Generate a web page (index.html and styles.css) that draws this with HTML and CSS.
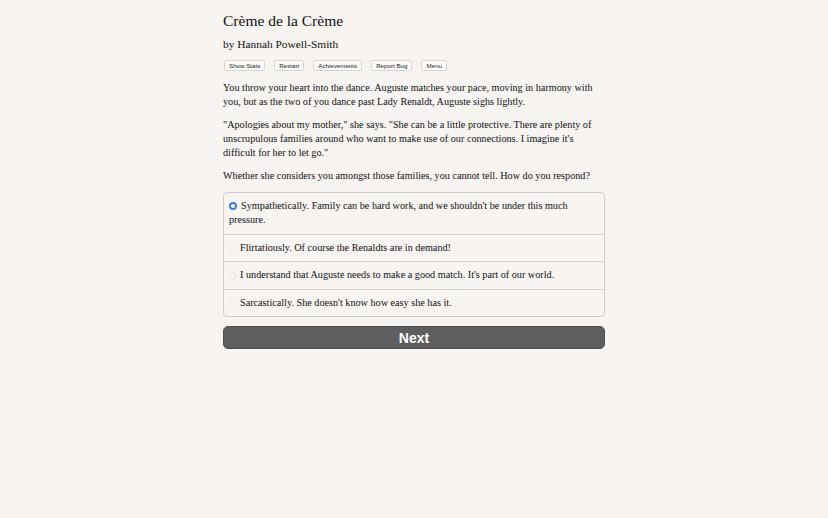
FILE: index.html
```html
<!DOCTYPE html>
<html>
<head>
<meta charset="utf-8">
<link rel="stylesheet" href="styles.css">
</head>
<body>
<div class="container">
  <header class="header">
    <h1 class="title">Crème de la Crème</h1>
    <h2 class="author">by Hannah Powell-Smith</h2>
    <div class="buttons">
      <button class="spacedLink">Show Stats</button>
      <button class="spacedLink">Restart</button>
      <button class="spacedLink">Achievements</button>
      <button class="spacedLink">Report Bug</button>
      <button class="spacedLink">Menu</button>
    </div>
  </header>
  <main class="text">
    <p>You throw your heart into the dance. Auguste matches your pace, moving in harmony with you, but as the two of you dance past Lady Renaldt, Auguste sighs lightly.</p>
    <p>"Apologies about my mother," she says. "She can be a little protective. There are plenty of unscrupulous families around who want to make use of our connections. I imagine it's difficult for her to let go."</p>
    <p>Whether she considers you amongst those families, you cannot tell. How do you respond?</p>
    <form class="choice">
      <label class="option first"><span class="radio checked"></span>Sympathetically. Family can be hard work, and we shouldn't be under this much pressure.</label>
      <label class="option"><span class="radio"></span>Flirtatiously. Of course the Renaldts are in demand!</label>
      <label class="option"><span class="radio"></span>I understand that Auguste needs to make a good match. It's part of our world.</label>
      <label class="option last"><span class="radio"></span>Sarcastically. She doesn't know how easy she has it.</label>
    </form>
    <button class="next">Next</button>
  </main>
</div>
</body>
</html>
```
FILE: styles.css
```css
html, body {
  margin: 0;
  padding: 0;
  background: #f7f4f1;
}
body {
  font-family: "Liberation Serif", "DejaVu Serif", serif;
  color: #111;
}
.container {
  width: 382px;
  margin: 0 auto;
  padding-top: 11px;
}
.title {
  font-size: 15.5px;
  font-weight: normal;
  margin: 0;
  line-height: 20px;
}
.author {
  font-size: 11.4px;
  font-weight: normal;
  margin: 6px 0 0 0;
  line-height: 14px;
}
.buttons {
  display: flex;
  gap: 9px;
  margin-top: 9px;
  padding-left: 1px;
}
.spacedLink {
  font-family: "Liberation Sans", Arial, sans-serif;
  font-size: 6.2px;
  color: #222;
  background: #fdfcfb;
  border: 1px solid #d8d6d3;
  border-radius: 2px;
  padding: 1px 4px;
  height: 11px;
  line-height: 8px;
  margin: 0;
}
.text {
  margin-top: 10px;
  font-size: 10.2px;
  line-height: 14px;
}
.text p {
  margin: 0 0 9px 0;
}
.choice {
  margin-top: 8px;
  border: 1px solid #cfcdca;
  border-radius: 4px;
  display: flex;
  flex-direction: column;
}
.option {
  display: block;
  padding: 6px 5px 6.5px 5px;
  border-top: 1px solid #d4d2cf;
}
.option.first {
  border-top: none;
}
.radio {
  display: inline-block;
  width: 7px;
  height: 7px;
  border-radius: 50%;
  border: 1px solid #e3e1de;
  background: #fbfaf9;
  margin-right: 4px;
  vertical-align: -1px;
  box-sizing: border-box;
}
.radio.checked {
  background: #fff;
  border: 2.5px solid #3a7de0;
  width: 8px;
  height: 8px;
}
.next {
  display: block;
  width: 100%;
  margin-top: 9px;
  height: 23px;
  background: #5e5e5e;
  color: #fff;
  border: 1px solid #4e4e4e;
  border-radius: 5px;
  font-family: "Liberation Sans", Arial, sans-serif;
  font-weight: bold;
  font-size: 14px;
  padding: 0;
}
```
